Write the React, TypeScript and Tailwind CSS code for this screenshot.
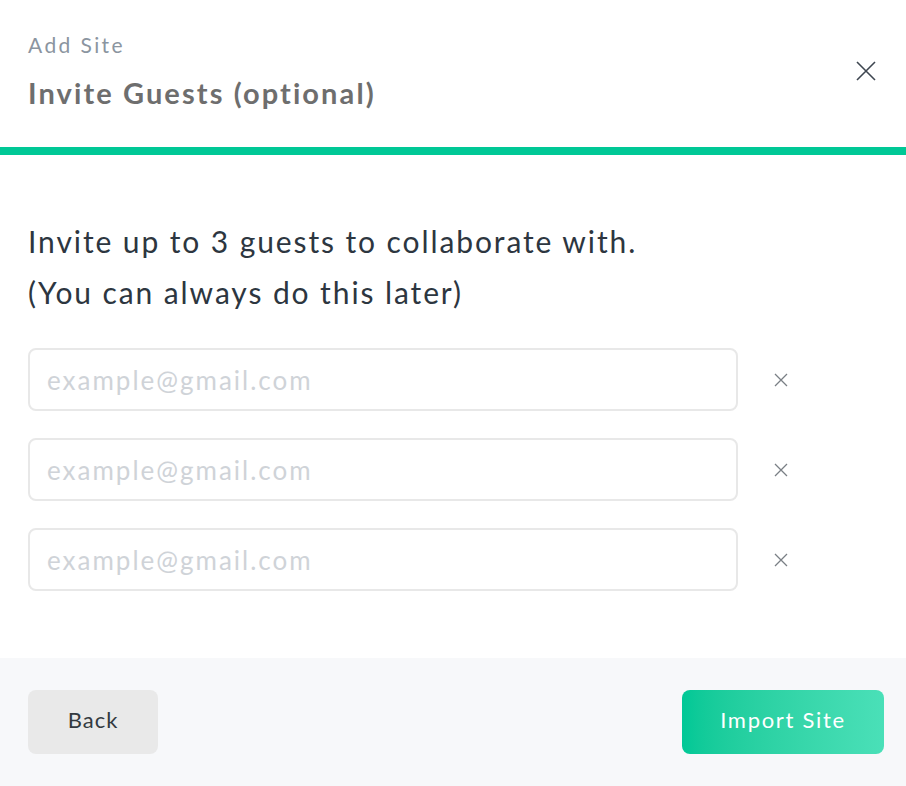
import React from "react";

const font = { fontFamily: "Lato, 'Noto Sans', sans-serif" };

function SmallX() {
  return (
    <svg width="16" height="16" viewBox="0 0 16 16" className="text-[#7a7f85]">
      <path d="M2 2L14 14M14 2L2 14" stroke="currentColor" strokeWidth="1.3" fill="none" />
    </svg>
  );
}

export default function App() {
  return (
    <div className="w-[906px] h-[786px] bg-white flex flex-col" style={font}>
      <div className="h-[147px] flex items-start justify-between pl-[28px] pr-[30px]">
        <div className="pt-[30px]">
          <div className="text-[21px] leading-[30px] text-[#8b95a0] tracking-[2.4px]">Add Site</div>
          <div className="text-[29px] leading-[36px] mt-[15px] font-bold text-[#6e6e6e] tracking-[2.1px]">Invite Guests (optional)</div>
        </div>
        <div className="pt-[61px]">
          <svg width="20" height="20" viewBox="0 0 20 20" className="text-[#3e4650]">
            <path d="M1 1L19 19M19 1L1 19" stroke="currentColor" strokeWidth="1.6" fill="none" />
          </svg>
        </div>
      </div>
      <div className="h-[8px] bg-[#00c896]" />
      <div className="flex-1 pl-[28px] pr-[28px] pt-[61px]">
        <div className="text-[30px] leading-[51px] text-[#2d3640] tracking-[1.9px]">
          <div>Invite up to 3 guests to collaborate with.</div>
          <div>(You can always do this later)</div>
        </div>
        <div className="mt-[30px] flex flex-col gap-[27px]">
          {[0, 1, 2].map((i) => (
            <div key={i} className="flex items-center">
              <input
                placeholder="example@gmail.com"
                className="w-[710px] h-[63px] border-2 border-[#e8e8e8] rounded-[8px] px-[17px] text-[26px] text-[#2d3640] placeholder:text-[#cfd3d8] outline-none tracking-[2px]"
                style={font}
              />
              <div className="ml-[35px] flex items-center">
                <SmallX />
              </div>
            </div>
          ))}
        </div>
      </div>
      <div className="h-[128px] bg-[#f7f8fa] flex items-start justify-between pl-[28px] pr-[22px] pt-[32px]">
        <button className="w-[130px] h-[64px] pb-[5px] rounded-[8px] bg-[#e9e9e9] text-[22px] text-[#333a40] tracking-[1px]" style={font}>
          Back
        </button>
        <button
          className="w-[202px] h-[64px] pb-[5px] rounded-[8px] bg-gradient-to-r from-[#00c896] to-[#4ae0b8] text-[22px] text-white tracking-[1.7px]"
          style={font}
        >
          Import Site
        </button>
      </div>
    </div>
  );
}
